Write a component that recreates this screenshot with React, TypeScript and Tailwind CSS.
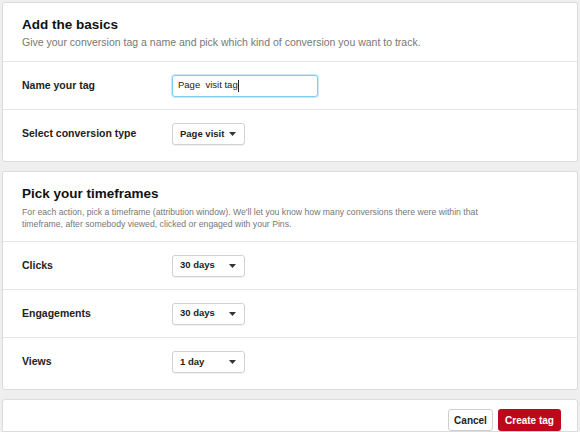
import React from 'react';

const font = { fontFamily: '"Liberation Sans", Arial, Helvetica, sans-serif' };

function Caret() {
  return (
    <svg width="7" height="4" viewBox="0 0 7 4" className="shrink-0">
      <path d="M0 0h7L3.5 4z" fill="#333" />
    </svg>
  );
}

function Select({ value }: { value: string }) {
  return (
    <div className="flex items-center justify-between h-[22px] w-[73px] pl-[7px] pr-[8px] rounded-[3px] border border-[#d2d2d2] bg-white text-[9.5px] font-bold text-[#222] whitespace-nowrap shadow-[0_1px_0_rgba(0,0,0,0.05)]">
      <span>{value}</span>
      <Caret />
    </div>
  );
}

function Row({ label, children, last = false }: { label: string; children: React.ReactNode; last?: boolean }) {
  return (
    <div className={`flex items-center px-[19px] ${last ? 'h-[51px] pb-[3px]' : 'h-[48px] border-b border-[#e6e6e6]'}`}>
      <div className="w-[150px] text-[10.5px] font-bold text-[#222]">{label}</div>
      {children}
    </div>
  );
}

function Card({ children, className = '' }: { children: React.ReactNode; className?: string }) {
  return <div className={`bg-white border border-[#dcdcdc] rounded-[3px] ${className}`}>{children}</div>;
}

export default function App() {
  return (
    <div className="w-[580px] h-[432px] overflow-hidden bg-[#efefef] pt-[2px] px-[2px] flex flex-col gap-[9px]" style={font}>
      {/* Basics */}
      <Card>
        <div className="px-[19px] pt-[13px] pb-[12px] border-b border-[#e6e6e6]">
          <h2 className="text-[13.5px] font-bold text-[#111] leading-[18px]">Add the basics</h2>
          <p className="mt-[1px] text-[10.5px] text-[#777] leading-[14px]">
            Give your conversion tag a name and pick which kind of conversion you want to track.
          </p>
        </div>
        <Row label="Name your tag">
          <div className="flex items-center h-[22px] w-[146px] px-[5px] rounded-[3px] border border-[#7fcdef] shadow-[0_0_0_1px_#c6e9f8] text-[9.5px] text-[#222]">
            <span className="whitespace-pre">Page  visit tag</span>
            <span className="w-px h-[12px] bg-[#222]" />
          </div>
        </Row>
        <Row label="Select conversion type" last>
          <Select value="Page visit" />
        </Row>
      </Card>

      {/* Timeframes */}
      <Card>
        <div className="px-[19px] pt-[13px] pb-[11px] border-b border-[#e6e6e6]">
          <h2 className="text-[13.5px] font-bold text-[#111] leading-[18px]">Pick your timeframes</h2>
          <p className="mt-[3px] max-w-[470px] text-[8.7px] text-[#777] leading-[12px]">
            For each action, pick a timeframe (attribution window). We'll let you know how many conversions there were within that timeframe, after somebody viewed, clicked or engaged with your Pins.
          </p>
        </div>
        <Row label="Clicks">
          <Select value="30 days" />
        </Row>
        <Row label="Engagements">
          <Select value="30 days" />
        </Row>
        <Row label="Views" last>
          <Select value="1 day" />
        </Row>
      </Card>

      {/* Footer */}
      <Card className="flex-1 rounded-b-none">
        <div className="flex justify-end gap-[5px] pt-[9px] pr-[16px]">
          <button className="h-[22px] w-[45px] rounded-[3px] border border-[#cfcfcf] bg-white text-[10px] font-bold text-[#222]">
            Cancel
          </button>
          <button className="h-[22px] w-[63px] rounded-[3px] bg-[#bd081c] text-[10px] font-bold text-white">
            Create tag
          </button>
        </div>
      </Card>
    </div>
  );
}
